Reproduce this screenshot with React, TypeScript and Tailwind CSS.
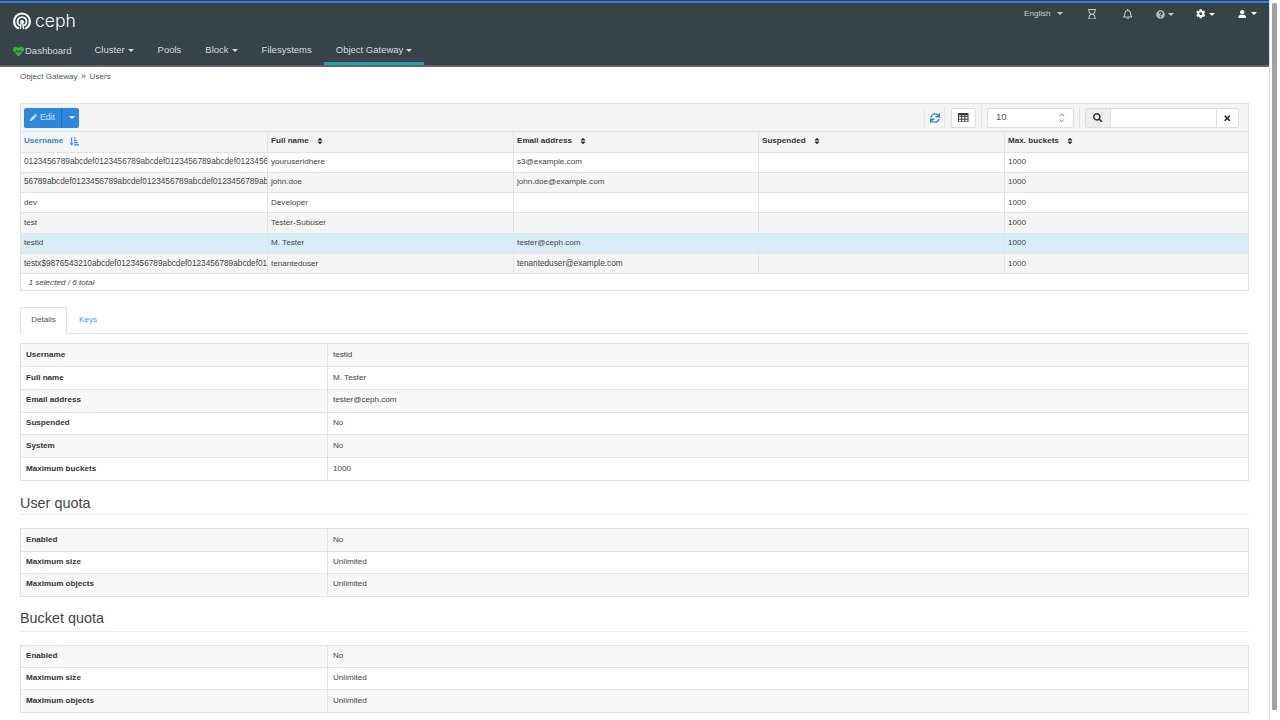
import { FaCog, FaHeartbeat, FaPen, FaQuestionCircle, FaRegBell, FaRegHourglass, FaSearch, FaSort, FaSortAmountDownAlt, FaSync, FaTimes, FaUser } from 'react-icons/fa';
import { ChevronDown, ChevronUp } from 'lucide-react';

const users = [
  ['0123456789abcdef0123456789abcdef0123456789abcdef0123456789abcdef', 'youruseridhere', 's3@example.com', '', '1000'],
  ['56789abcdef0123456789abcdef0123456789abcdef0123456789abcdef', 'john.doe', 'john.doe@example.com', '', '1000'],
  ['dev', 'Developer', '', '', '1000'],
  ['test', 'Tester-Subuser', '', '', '1000'],
  ['testid', 'M. Tester', 'tester@ceph.com', '', '1000'],
  ['testx$9876543210abcdef0123456789abcdef0123456789abcdef0123456789abcdef', 'tenanteduser', 'tenanteduser@example.com', '', '1000'],
];

const columns = ['Username', 'Full name', 'Email address', 'Suspended', 'Max. buckets'];

const details = [
  ['Username', 'testid'],
  ['Full name', 'M. Tester'],
  ['Email address', 'tester@ceph.com'],
  ['Suspended', 'No'],
  ['System', 'No'],
  ['Maximum buckets', '1000'],
];

const quota = [
  ['Enabled', 'No'],
  ['Maximum size', 'Unlimited'],
  ['Maximum objects', 'Unlimited'],
];

const Caret = () => (
  <span className="ml-[3px] inline-block h-0 w-0 border-x-[3px] border-t-[3px] border-x-transparent border-t-current align-middle" />
);

const CephLogo = () => (
  <svg viewBox="0 0 20 20" className="h-[18px] w-[18px]" fill="none" stroke="#fff" strokeLinecap="round">
    <path d="M5.600 18C2.800 16.500 1.300 13.700 1.300 10.500 1.300 5.600 5.200 1.700 10 1.700s8.700 3.900 8.700 8.800c0 3.200-1.500 6-4.300 7.500" strokeWidth="2.400" />
    <path d="M7 14.600C5.600 13.700 5 12.300 5 10.700 5 7.900 7.200 5.700 10 5.700s5 2.200 5 5c0 1.600-.6 3-2 3.900" strokeWidth="2" />
    <circle cx="10" cy="10.800" r="1.700" fill="#fff" strokeWidth="1" />
    <path d="M9 13 8.300 18.300M11 13l.7 5.300" strokeWidth="1.600" />
  </svg>
);

const GridIcon = () => (
  <svg viewBox="0 0 11 10" className="h-[9.500px] w-[10.500px]" fill="none" stroke="#333" strokeWidth="1">
    <rect x="0.500" y="0.500" width="10" height="9" />
    <path d="M0.500 3.500h10M0.500 6.500h10M3.800 1v8.500M7.200 1v8.500" />
    <path d="M0.500 1.500h10" strokeWidth="1.500" />
  </svg>
);

const NavItem = ({ label, caret, active }: { label: string; caret?: boolean; active?: boolean }) => (
  <div className={`flex h-[27px] items-center px-[12px] ${active ? 'border-b-[3px] border-[#2b9ca8]' : 'pb-[2px]'}`}>
    {label}
    {caret && <Caret />}
  </div>
);

const InfoTable = ({ rows, rowClass }: { rows: string[][]; rowClass: string }) => (
  <div className="border border-b-0 border-[#e3e3e3] text-[8.1px] leading-none text-[#333]">
    {rows.map(([name, value], i) => (
      <div key={name} className={`grid grid-cols-[307px_1fr] border-b border-[#e3e3e3] ${rowClass} ${i % 2 === 0 ? 'bg-[#f8f8f8]' : 'bg-white'}`}>
        <div className="flex items-center border-r border-[#e3e3e3] pb-[1px] pl-[5px] font-bold">{name}</div>
        <div className="flex items-center pb-[1px] pl-[5px] text-[#444]">{value}</div>
      </div>
    ))}
  </div>
);

const SectionTitle = ({ children, className }: { children: string; className: string }) => (
  <h3 className={`border-b border-[#eeeeee] text-[14.4px] leading-[20px] text-[#444] ${className}`}>{children}</h3>
);

export default function App() {
  return (
    <div className="flex h-[720px] w-[1280px] overflow-hidden bg-white font-['Liberation_Sans',sans-serif]">
      <div className="w-[1269px] shrink-0">
        {/* navbar */}
        <div className="h-[67px] border-b-2 border-b-[#5e666b] bg-[#374249] text-[9.5px] text-[#d8dbdd]">
          <div className="pt-[1px]">
            <div className="h-[2px] bg-[#2b87e0]" />
          </div>
          <div className="flex h-[35px] items-start justify-between">
            <div className="mt-[7px] ml-[13px] flex items-center gap-[4px] text-white">
              <CephLogo />
              <span className="font-['Inter',sans-serif] text-[17.5px] leading-[22px] font-light">ceph</span>
            </div>
            <div className="mt-[5px] flex items-center text-[8.1px] text-[#c9cdd0]">
              <span className="flex w-[50px] items-center">English<span className="ml-[3px]"><Caret /></span></span>
              <span className="flex w-[36px] items-center justify-center"><FaRegHourglass className="h-[10.500px] w-[8px]" /></span>
              <span className="flex w-[35px] items-center justify-center"><FaRegBell className="h-[10.500px] w-[9.500px]" /></span>
              <span className="flex w-[40px] items-center justify-center"><FaQuestionCircle className="h-[9px] w-[9px] text-[#b4b9bc]" /><Caret /></span>
              <span className="flex w-[41px] items-center justify-center text-white"><FaCog className="h-[9.500px] w-[9.500px]" /><Caret /></span>
              <span className="flex w-[43px] items-center justify-center text-white"><FaUser className="h-[8.500px] w-[8.500px]" /><span className="ml-[2px]"><Caret /></span></span>
            </div>
          </div>
          <div className="flex items-start pl-[1px]">
            <div className="flex h-[27px] w-[81.500px] items-center pb-[1px] pl-[12px]">
              <FaHeartbeat className="mr-[1px] h-[11px] w-[11px] text-[#31b931]" />
              Dashboard
            </div>
            <NavItem label="Cluster" caret />
            <NavItem label="Pools" />
            <NavItem label="Block" caret />
            <NavItem label="Filesystems" />
            <NavItem label="Object Gateway" caret active />
          </div>
        </div>

        <div className="px-[20px]">
          {/* breadcrumb */}
          <div className="flex h-[20px] items-center text-[8.1px] text-[#555]">
            Object Gateway<span className="mx-[3.500px] text-[9px]">»</span>Users
          </div>

          {/* toolbar */}
          <div className="mt-[16px] flex h-[29px] items-center justify-between border border-[#e3e3e3] bg-[#f5f5f5] pr-[9px] pl-[3px]">
            <div className="flex h-[20px] overflow-hidden rounded-[2px] bg-[#2b87e0] text-[8.67px] text-[#cfe4f8]">
              <div className="flex w-[38px] items-center justify-center gap-[3px] border-r border-[#1f6fbc] pb-[1px]">
                <FaPen className="h-[7px] w-[7px]" />
                Edit
              </div>
              <div className="flex w-[17px] items-center justify-center text-white"><Caret /></div>
            </div>
            <div className="flex items-center text-[8.1px]">
              <div className="flex h-[21px] w-[21px] items-center justify-center border-x border-[#e8e8e8] text-[#2b87e0]">
                <FaSync className="h-[10px] w-[10px]" />
              </div>
              <div className="ml-[6px] flex h-[20px] w-[25px] items-center justify-center rounded-[2px] border border-[#dddddd] bg-white">
                <GridIcon />
              </div>
              <div className="ml-[5px] h-[21px] border-l border-[#e4e4e4]" />
              <div className="ml-[5px] flex h-[20px] w-[87px] items-center justify-between rounded-[2px] border border-[#dddddd] bg-white pr-[8px] pl-[8px] text-[#555]">
                <span className="text-[9.500px]">10</span>
                <span className="flex flex-col text-[#444]">
                  <ChevronUp className="-mb-[1px] h-[7.500px] w-[7.500px]" strokeWidth={2.2} />
                  <ChevronDown className="h-[7.500px] w-[7.500px]" strokeWidth={2.2} />
                </span>
              </div>
              <div className="ml-[5px] h-[21px] border-l border-[#e4e4e4]" />
              <div className="ml-[5px] flex h-[20px] w-[154px] overflow-hidden rounded-[2px] border border-[#dddddd] bg-white">
                <div className="flex w-[25px] items-center justify-center border-r border-[#dddddd] bg-[#eeeeee] text-[#333]">
                  <FaSearch className="h-[9.500px] w-[9.500px]" />
                </div>
                <div className="flex-1" />
                <div className="flex w-[22px] items-center justify-center border-l border-[#dddddd] pt-[2px] text-[#222]">
                  <FaTimes className="h-[8.500px] w-[8.500px]" />
                </div>
              </div>
            </div>
          </div>

          {/* users table */}
          <div className="border-x border-[#e3e3e3] text-[8.1px] leading-none">
            <div className="grid h-[20.500px] grid-cols-[246px_246px_245px_246px_1fr] border-b border-[#e3e3e3] bg-[#f5f5f5] font-bold text-[#333]">
              {columns.map((name, i) => (
                <div key={name} className={`flex items-center px-[3px] pb-[1px] ${i > 0 ? 'border-l border-[#e3e3e3]' : 'text-[#2b87e0]'}`}>
                  {name}
                  {i === 0 ? <FaSortAmountDownAlt className="ml-[7px] h-[9px] w-[9px]" /> : <FaSort className="ml-[7px] h-[8px] w-[8px]" />}
                </div>
              ))}
            </div>
            {users.map((row, r) => (
              <div key={row[0]} className={`grid h-[20.330px] grid-cols-[246px_246px_245px_246px_1fr] border-b border-[#e3e3e3] text-[#444] ${r === 4 ? 'bg-[#d9edf7]' : r % 2 === 0 ? 'bg-white' : 'bg-[#f5f5f5]'}`}>
                {row.map((cell, i) => (
                  <div key={i} className={`flex items-center overflow-hidden px-[3px] whitespace-nowrap ${i > 0 ? 'border-l border-[#e3e3e3]' : 'pr-0'} ${cell.length > 20 ? 'text-[8.25px]' : ''}`}>
                    {cell}
                  </div>
                ))}
              </div>
            ))}
            <div className="flex h-[16.500px] items-center border-b border-[#e3e3e3] pt-[2px] pl-[7.500px] text-[#444] italic">1 selected / 6 total</div>
          </div>

          {/* tabs */}
          <div className="mt-[16px] flex h-[27px] items-end border-b border-[#e3e3e3] text-[8.1px]">
            <div className="-mb-[1px] flex h-[27px] w-[47px] items-center justify-center rounded-t-[2px] border border-b-0 border-[#e3e3e3] bg-white pb-[2px] text-[#555]">Details</div>
            <div className="flex h-[26px] w-[42px] items-center justify-center text-[#3d9bec]">Keys</div>
          </div>

          <div className="mt-[9.500px]">
            <InfoTable rows={details} rowClass="h-[22.750px]" />
          </div>

          <div className="mt-[12.500px]"><SectionTitle className="pb-[1px]">User quota</SectionTitle></div>
          <div className="mt-[13px]">
            <InfoTable rows={quota} rowClass="h-[22.400px]" />
          </div>

          <div className="mt-[11px]"><SectionTitle className="pb-[3px]">Bucket quota</SectionTitle></div>
          <div className="mt-[13px]">
            <InfoTable rows={quota} rowClass="h-[22.400px]" />
          </div>
        </div>
      </div>

      {/* scrollbar */}
      <div className="flex-1 border-l border-[#e0e0e0] bg-white pt-[3px] pl-[2px]">
        <div className="h-[707px] w-[5px] rounded-[1px] bg-[#a3a3a3]" />
      </div>
    </div>
  );
}
